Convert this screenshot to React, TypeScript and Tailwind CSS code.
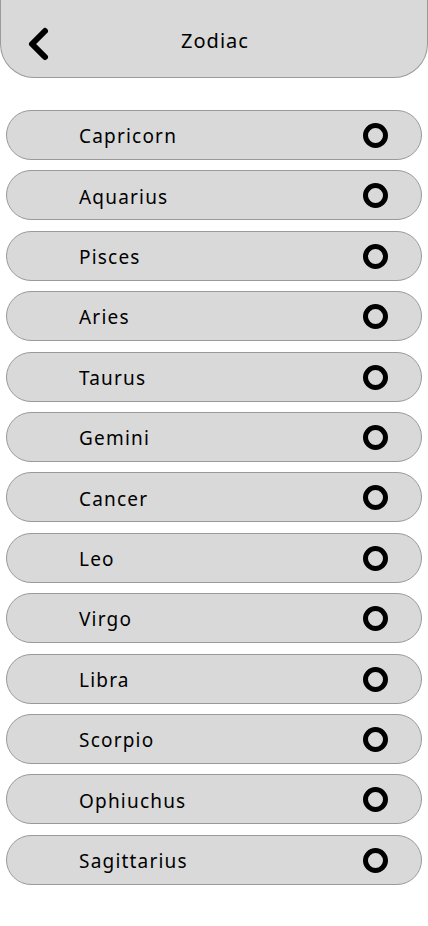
const signs = [
  'Capricorn',
  'Aquarius',
  'Pisces',
  'Aries',
  'Taurus',
  'Gemini',
  'Cancer',
  'Leo',
  'Virgo',
  'Libra',
  'Scorpio',
  'Ophiuchus',
  'Sagittarius',
];

function BackIcon() {
  return (
    <svg width="26" height="38" viewBox="0 0 26 38" fill="none">
      <path
        d="M19 6 L6 19 L19 32"
        stroke="#000"
        strokeWidth="6"
        strokeLinecap="round"
        strokeLinejoin="round"
      />
    </svg>
  );
}

export default function App() {
  return (
    <div
      className="min-h-[926px] w-[428px] bg-white text-black"
      style={{ fontFamily: '"Noto Sans", Lato, sans-serif' }}
    >
      <header className="relative flex h-[78px] items-center justify-center rounded-b-[34px] border border-t-0 border-[#9a9a9a] bg-[#d9d9d9]">
        <button className="absolute left-[25px] top-[25px]">
          <BackIcon />
        </button>
        <h1 className="pl-[2px] pt-[4px] text-[20px] tracking-[1px]">Zodiac</h1>
      </header>

      <ul className="mt-[32px] flex flex-col gap-[10.4px] px-[6px]">
        {signs.map((sign) => (
          <li
            key={sign}
            className="flex h-[50px] items-center justify-between rounded-full border border-[#9a9a9a] bg-[#d9d9d9] pl-[72px] pr-[33px] pt-[3px]"
          >
            <span className="text-[19px] tracking-[1.2px]">{sign}</span>
            <span className="mb-[2px] h-[25px] w-[25px] rounded-full border-[5px] border-black" />
          </li>
        ))}
      </ul>
    </div>
  );
}
